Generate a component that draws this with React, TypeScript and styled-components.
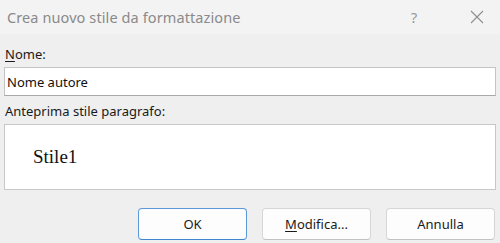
import React from "react";
import styled, { createGlobalStyle } from "styled-components";

const GlobalStyle = createGlobalStyle`
  html, body {
    margin: 0;
    padding: 0;
    background: #efefef;
  }
  body {
    font-family: "Noto Sans", "Open Sans", sans-serif;
  }
`;

const Dialog = styled.div`
  width: 500px;
  height: 243px;
  display: flex;
  flex-direction: column;
  background: #efefef;
  overflow: hidden;
`;

const TitleBar = styled.div`
  height: 34px;
  display: flex;
  align-items: center;
  background: #f3f3f3;
  padding-left: 7px;
`;

const Title = styled.div`
  flex: 1;
  font-size: 14.5px;
  color: #8a8a8a;
  letter-spacing: 0.1px;
`;

const TitleButton = styled.div<{ $w: number }>`
  width: ${p => p.$w}px;
  height: 34px;
  display: flex;
  align-items: center;
  justify-content: center;
  color: #9a9a9a;
  font-size: 15px;
`;

const Body = styled.div`
  flex: 1;
  display: flex;
  flex-direction: column;
  padding: 12px 4px 0 4px;
`;

const Label = styled.div`
  font-size: 13px;
  color: #1a1a1a;
  height: 21px;
  line-height: 17px;
  padding-left: 1px;

  u {
    text-decoration-thickness: 1px;
    text-underline-offset: 2px;
  }
`;

const TextInput = styled.div`
  height: 27px;
  background: #ffffff;
  border: 1px solid #c4c4c4;
  border-bottom-color: #a8a8a8;
  display: flex;
  align-items: center;
  padding-left: 2px;
  font-size: 13px;
  color: #111;
  margin-bottom: 7px;
`;

const Preview = styled.div`
  height: 64px;
  background: #ffffff;
  border: 1px solid #c8c8c8;
  display: flex;
  align-items: center;
  padding-left: 28px;
  font-family: "Liberation Serif", "Times New Roman", serif;
  font-size: 19px;
  color: #111;
`;

const ButtonRow = styled.div`
  display: flex;
  justify-content: flex-end;
  gap: 15px;
  margin-top: 18px;
  padding-right: 1px;
`;

const Button = styled.div<{ $primary?: boolean }>`
  width: 109px;
  height: 32px;
  box-sizing: border-box;
  background: #fdfdfd;
  border: 1px solid ${p => (p.$primary ? "#5a9ad8" : "#d6d6d6")};
  border-bottom-color: ${p => (p.$primary ? "#3f86cf" : "#c2c2c2")};
  border-radius: 4px;
  display: flex;
  align-items: center;
  justify-content: center;
  font-size: 13px;
  color: #1a1a1a;

  u {
    text-underline-offset: 2px;
  }
`;

export default function App() {
  return (
    <>
      <GlobalStyle />
      <Dialog>
        <TitleBar>
          <Title>Crea nuovo stile da formattazione</Title>
          <TitleButton $w={30}>?</TitleButton>
          <TitleButton $w={34} style={{ marginRight: 6, marginLeft: 31 }}>
            <svg width="14" height="14" viewBox="0 0 14 14">
              <path d="M1 1 L13 13 M13 1 L1 13" stroke="#8e8e8e" strokeWidth="1.1" fill="none" />
            </svg>
          </TitleButton>
        </TitleBar>
        <Body>
          <Label>
            <u>N</u>ome:
          </Label>
          <TextInput>Nome autore</TextInput>
          <Label>Anteprima stile paragrafo:</Label>
          <Preview>Stile1</Preview>
          <ButtonRow>
            <Button $primary>OK</Button>
            <Button>
              <span>
                <u>M</u>odifica...
              </span>
            </Button>
            <Button>Annulla</Button>
          </ButtonRow>
        </Body>
      </Dialog>
    </>
  );
}
